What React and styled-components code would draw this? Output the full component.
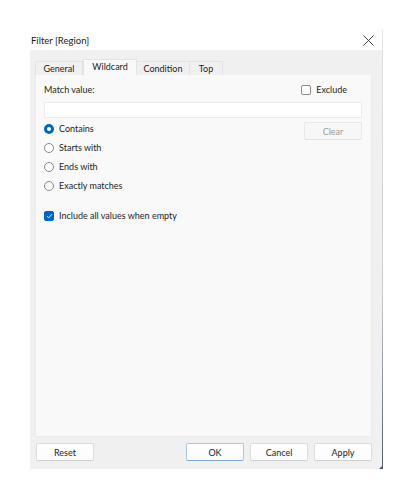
import React, { useState } from "react";
import styled, { createGlobalStyle } from "styled-components";

const GlobalStyle = createGlobalStyle`
  html, body {
    margin: 0;
    padding: 0;
    background: #ffffff;
  }
  body {
    font-family: "Segoe UI", Lato, "Noto Sans", "Liberation Sans", sans-serif;
    font-size: 9px;
    color: #1e1e1e;
  }
`;

const Page = styled.div`
  width: 411px;
  height: 498px;
  padding: 30px 0 0 30px;
  box-sizing: border-box;
`;

const Dialog = styled.div`
  position: relative;
  width: 352px;
  height: 439px;
  display: flex;
  flex-direction: column;
  border-right: 1px solid transparent;
  border-image: linear-gradient(#e4e4e4, #c8cacd 60%, #4f5c6b) 1;
`;

const TitleBar = styled.div`
  height: 20px;
  display: flex;
  align-items: center;
  justify-content: space-between;
  padding: 0 8px 0 1px;
  font-size: 9.5px;
  color: #1b1b1b;
`;

const CloseButton = styled.button`
  border: none;
  background: transparent;
  padding: 0;
  width: 12px;
  height: 12px;
  display: flex;
  align-items: center;
  justify-content: center;
`;

const Body = styled.div`
  flex: 1;
  background: #f0f0f0;
  padding: 9px 10px 8px 5px;
  display: flex;
  flex-direction: column;
`;

const TabStrip = styled.div`
  display: flex;
  align-items: flex-end;
  height: 16px;
  padding-left: 1px;
`;

const Tab = styled.div`
  width: ${(p) => p.$w}px;
  height: ${(p) => (p.$active ? 16 : 14)}px;
  box-sizing: border-box;
  display: flex;
  align-items: center;
  justify-content: center;
  background: ${(p) => (p.$active ? "#f9f9f9" : "#f0f0f0")};
  border: 1px solid #e3e3e3;
  border-bottom: none;
  margin-left: ${(p) => (p.$active ? 0 : -1)}px;
  position: relative;
  z-index: ${(p) => (p.$active ? 1 : 0)};
  padding-bottom: ${(p) => (p.$active ? 2 : 0)}px;
`;

const Panel = styled.div`
  flex: 1;
  background: #f9f9f9;
  border: 1px solid #ebebeb;
  border-top: none;
  padding: 9px 9px 0 8px;
  display: flex;
  flex-direction: column;
`;

const Row = styled.div`
  display: flex;
  align-items: center;
  justify-content: space-between;
`;

const MatchLabel = styled.span`
  line-height: 12px;
`;

const Check = styled.label`
  display: flex;
  align-items: center;
  gap: 5px;
  line-height: 12px;
  margin-right: ${(p) => p.$mr || 0}px;
`;

const Box = styled.span`
  width: 10px;
  height: 10px;
  box-sizing: border-box;
  border-radius: 2px;
  border: 1px solid ${(p) => (p.$on ? "#0067c0" : "#8a8a8a")};
  background: ${(p) => (p.$on ? "#0067c0" : "#ffffff")};
  display: flex;
  align-items: center;
  justify-content: center;
`;

const TextInput = styled.input`
  margin-top: 6px;
  height: 16px;
  box-sizing: border-box;
  border: 1px solid #ececec;
  background: #ffffff;
  outline: none;
  width: 100%;
`;

const OptionsRow = styled.div`
  display: flex;
  justify-content: space-between;
  align-items: flex-start;
  margin-top: 4px;
`;

const RadioGroup = styled.div`
  display: flex;
  flex-direction: column;
  gap: 7px;
  padding-top: 1px;
`;

const Radio = styled.label`
  display: flex;
  align-items: center;
  gap: 5px;
  line-height: 12px;
`;

const Dot = styled.span`
  width: 10px;
  height: 10px;
  box-sizing: border-box;
  border-radius: 50%;
  border: ${(p) => (p.$on ? "3px solid #0067c0" : "1px solid #8a8a8a")};
  background: #ffffff;
`;

const Button = styled.button`
  width: ${(p) => p.$w || 58}px;
  height: 18px;
  box-sizing: border-box;
  font-family: inherit;
  font-size: 9px;
  padding: 0;
  border-radius: 2px;
  background: ${(p) => (p.$disabled ? "#f7f7f7" : "#fdfdfd")};
  color: ${(p) => (p.$disabled ? "#9c9c9c" : "#1e1e1e")};
  border: 1px solid ${(p) => (p.$primary ? "#a9c8e6" : p.$disabled ? "#e8e8e8" : "#dcdcdc")};
  border-bottom-color: ${(p) => (p.$primary ? "#7ea9d4" : p.$disabled ? "#e2e2e2" : "#cfcfcf")};
`;

const IncludeRow = styled.div`
  margin-top: 18px;
`;

const Footer = styled.div`
  display: flex;
  align-items: center;
  gap: 6px;
  margin-top: 6px;
  padding-left: 1px;
`;

const Spacer = styled.div`
  flex: 1;
`;

const Grip = styled.svg`
  position: absolute;
  right: -1px;
  bottom: 0;
`;

const tabs = [
  { name: "General", w: 48 },
  { name: "Wildcard", w: 54 },
  { name: "Condition", w: 54 },
  { name: "Top", w: 34 },
];

const options = ["Contains", "Starts with", "Ends with", "Exactly matches"];

export default function App() {
  const [mode, setMode] = useState("Contains");
  const [exclude, setExclude] = useState(false);
  const [includeAll, setIncludeAll] = useState(true);

  return (
    <Page>
      <GlobalStyle />
      <Dialog>
        <TitleBar>
          <span>Filter [Region]</span>
          <CloseButton aria-label="Close">
            <svg width="11" height="11" viewBox="0 0 11 11">
              <path d="M0.5 0.5 L10.5 10.5 M10.5 0.5 L0.5 10.5" stroke="#2b2b2b" strokeWidth="0.9" />
            </svg>
          </CloseButton>
        </TitleBar>
        <Body>
          <TabStrip>
            {tabs.map((t) => (
              <Tab key={t.name} $w={t.w} $active={t.name === "Wildcard"}>
                {t.name}
              </Tab>
            ))}
          </TabStrip>
          <Panel>
            <Row>
              <MatchLabel>Match value:</MatchLabel>
              <Check $mr={15} onClick={() => setExclude(!exclude)}>
                <Box $on={exclude} />
                Exclude
              </Check>
            </Row>
            <TextInput />
            <OptionsRow>
              <RadioGroup>
                {options.map((o) => (
                  <Radio key={o} onClick={() => setMode(o)}>
                    <Dot $on={mode === o} />
                    {o}
                  </Radio>
                ))}
              </RadioGroup>
              <Button $disabled>Clear</Button>
            </OptionsRow>
            <IncludeRow>
              <Check onClick={() => setIncludeAll(!includeAll)}>
                <Box $on={includeAll}>
                  {includeAll && (
                    <svg width="7" height="6" viewBox="0 0 7 6">
                      <path d="M1 3.2 L2.7 4.8 L6 1.2" fill="none" stroke="#ffffff" strokeWidth="0.9" />
                    </svg>
                  )}
                </Box>
                Include all values when empty
              </Check>
            </IncludeRow>
          </Panel>
          <Footer>
            <Button>Reset</Button>
            <Spacer />
            <Button $primary>OK</Button>
            <Button>Cancel</Button>
            <Button>Apply</Button>
          </Footer>
        </Body>
        <Grip width="4" height="4" viewBox="0 0 4 4">
          <path d="M4 0 L4 4 L0 4 Z" fill="#4f5c6b" />
        </Grip>
      </Dialog>
    </Page>
  );
}
